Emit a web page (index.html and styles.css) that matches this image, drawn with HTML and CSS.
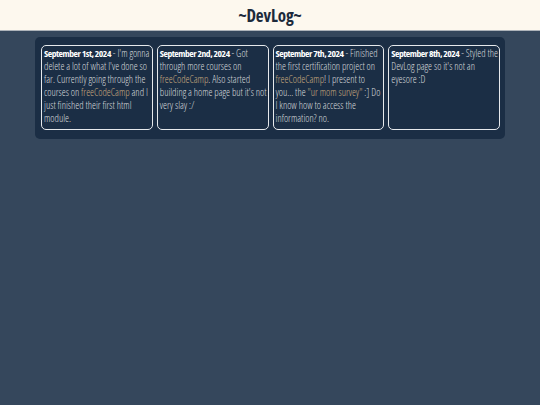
FILE: index.html
```html
<!DOCTYPE html>
<html>
<head>
<meta charset="utf-8">
<link rel="stylesheet" href="styles.css">
</head>
<body>
<header class="top">
  <h1 class="title">~DevLog~</h1>
</header>
<main class="log">
  <article class="entry"><span class="date">September 1st, 2024</span> - I'm gonna delete a lot of what I've done so far. Currently going through the courses on <span class="link">freeCodeCamp</span> and I just finished their first html module.</article>
  <article class="entry"><span class="date">September 2nd, 2024</span> - Got through more courses on <span class="link">freeCodeCamp</span>. Also started building a home page but it's not very slay :/</article>
  <article class="entry"><span class="date">September 7th, 2024</span> - Finished the first certification project on <span class="link">freeCodeCamp</span>! I present to you... the <span class="link">"ur mom survey"</span> :] Do I know how to access the information? no.</article>
  <article class="entry"><span class="date">September 8th, 2024</span> - Styled the DevLog page so it's not an eyesore :D</article>
</main>
</body>
</html>
```
FILE: styles.css
```css
html, body {
  margin: 0;
  padding: 0;
}
body {
  background: #35475c;
  min-height: 405px;
  font-family: "Open Sans", "Liberation Sans", sans-serif;
  font-stretch: 75%;
}
.top {
  background: #fdf8ee;
  height: 30px;
  border-bottom: 1px solid #aeb4ba;
  display: flex;
  align-items: center;
  justify-content: center;
}
.title {
  margin: 0;
  font-size: 17px;
  font-weight: 700;
  color: #1c2a3b;
  line-height: 1;
  letter-spacing: -0.1px;
}
.log {
  margin: 6px 35px 0 35px;
  background: #1b2e45;
  border-radius: 5px;
  padding: 8px 5px 9px 6px;
  display: grid;
  grid-template-columns: repeat(4, 1fr);
  gap: 4px;
}
.entry {
  border: 1px solid #e6e9ec;
  border-radius: 5px;
  padding: 1px 1px 2px 2px;
  min-height: 80px;
  font-size: 10px;
  font-weight: 300;
  line-height: 13px;
  color: #d6d9dc;
}
.date {
  font-size: 9.6px;
  font-weight: 700;
  color: #ffffff;
  letter-spacing: -0.45px;
}
.link {
  color: #c9a97e;
}
```
